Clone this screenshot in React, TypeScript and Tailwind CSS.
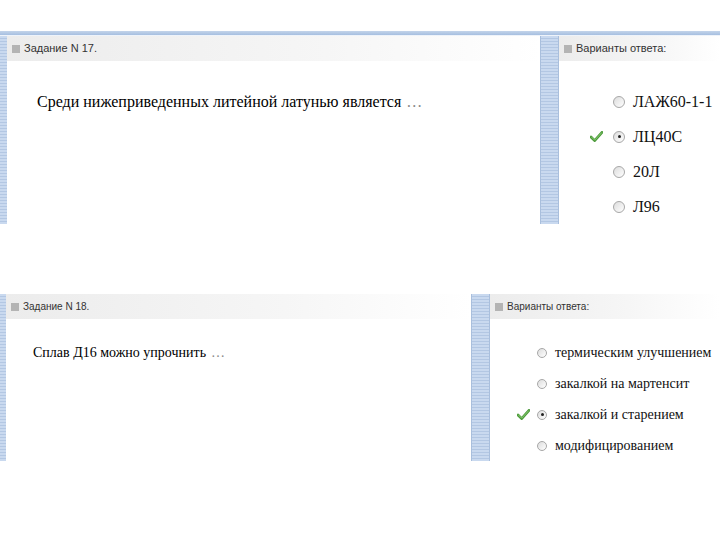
import React from 'react';

type Shot = {
  leftW: number;
  height: number;
  task: string;
  question: string;
  qSize: string;
  qPad: string;
  optSize: string;
  rowH: string;
  padTop: string;
  options: string[];
  correct: number;
  headerText: string;
};

const stripBg =
  'bg-[repeating-linear-gradient(180deg,#c9d9ef_0px,#c9d9ef_2px,#b3c7e3_2px,#b3c7e3_3px)]';

function CheckMark() {
  return (
    <svg viewBox="0 0 14 12" className="h-[11px] w-[13px]">
      <path d="M1 6.5 L5 10.5 L13 1.5" fill="none" stroke="#4c9a3a" strokeWidth="3" strokeLinecap="round" strokeLinejoin="round" />
      <path d="M1.5 6.5 L5 10 L12.5 2" fill="none" stroke="#8fd07a" strokeWidth="1" strokeLinecap="round" />
    </svg>
  );
}

function Radio({ checked, size }: { checked: boolean; size: string }) {
  return (
    <span
      className={`${size} flex shrink-0 items-center justify-center rounded-full border border-[#a7a7a7] bg-[linear-gradient(135deg,#dcdcdc,#ffffff)]`}
    >
      {checked && <span className="h-[3px] w-[3px] rounded-full bg-[#222]" />}
    </span>
  );
}

function PanelHeader({ label, size }: { label: string; size: string }) {
  return (
    <div className="flex h-[25px] items-center gap-[4px] bg-[linear-gradient(90deg,#ececec,#f6f6f6_60%,#ffffff)] pl-[5px]">
      <span className="h-[8px] w-[8px] bg-[#b4b4b4]" />
      <span className={`${size} text-[#333]`} style={{ fontFamily: '"Liberation Sans", Arial, sans-serif' }}>
        {label}
      </span>
    </div>
  );
}

function Screenshot({ s, top }: { s: Shot; top: boolean }) {
  const serif = { fontFamily: '"Liberation Serif", "Times New Roman", serif' };
  return (
    <div className="flex w-full flex-col" style={{ height: s.height }}>
      <div className="h-[4px] bg-[linear-gradient(180deg,#c3d4ea,#a6bfe0)]" />
      <div className="h-[1px] bg-[#eef3fa]" />
      <div className="flex flex-1">
        <div className={`${top ? 'w-[7px]' : 'w-[6px]'} ${stripBg}`} />
        <div className="flex flex-col bg-white" style={{ width: s.leftW }}>
          <PanelHeader label={s.task} size={s.headerText} />
          <div className={`${s.padTop} ${s.qPad}`}>
            <div className={`${s.rowH} flex items-center text-black ${s.qSize}`} style={serif}>
              {s.question}
              <span className="ml-[5px] text-[#888]">…</span>
            </div>
          </div>
        </div>
        <div className={`w-[19px] border-x border-[#a9bfdd] ${stripBg}`} />
        <div className="flex flex-1 flex-col bg-white">
          <PanelHeader label="Варианты ответа:" size={s.headerText} />
          <div className={`${s.padTop} flex flex-col`}>
            {s.options.map((o, i) => (
              <div key={o} className={`${s.rowH} flex items-center ${top ? 'pl-[31px]' : 'pl-[27px]'}`}>
                <span className={`flex ${top ? 'w-[23px]' : 'w-[20px]'}`}>{i === s.correct && <CheckMark />}</span>
                <Radio checked={i === s.correct} size={top ? 'h-[12px] w-[12px]' : 'h-[10px] w-[10px]'} />
                <span className={`ml-[8px] text-[#111] ${s.optSize}`} style={serif}>
                  {o}
                </span>
              </div>
            ))}
          </div>
        </div>
      </div>
    </div>
  );
}

const shots: Shot[] = [
  {
    leftW: 533,
    height: 193,
    task: 'Задание N 17.',
    question: 'Среди нижеприведенных литейной латунью является',
    qSize: 'text-[16px] font-medium',
    qPad: 'pl-[30px]',
    optSize: 'text-[16px]',
    rowH: 'h-[35px]',
    padTop: 'pt-[23px]',
    options: ['ЛАЖ60-1-1', 'ЛЦ40С', '20Л', 'Л96'],
    correct: 1,
    headerText: 'text-[11px]',
  },
  {
    leftW: 465,
    height: 164,
    task: 'Задание N 18.',
    question: 'Сплав Д16 можно упрочнить',
    qSize: 'text-[14px]',
    qPad: 'pl-[27px]',
    optSize: 'text-[14px]',
    rowH: 'h-[31px]',
    padTop: 'pt-[18px]',
    options: ['термическим улучшением', 'закалкой на мартенсит', 'закалкой и старением', 'модифицированием'],
    correct: 2,
    headerText: 'text-[10px]',
  },
];

export default function App() {
  return (
    <div className="flex h-[540px] w-[720px] flex-col gap-[70px] bg-white pt-[31px]">
      <Screenshot s={shots[0]} top />
      <Screenshot s={shots[1]} top={false} />
    </div>
  );
}
